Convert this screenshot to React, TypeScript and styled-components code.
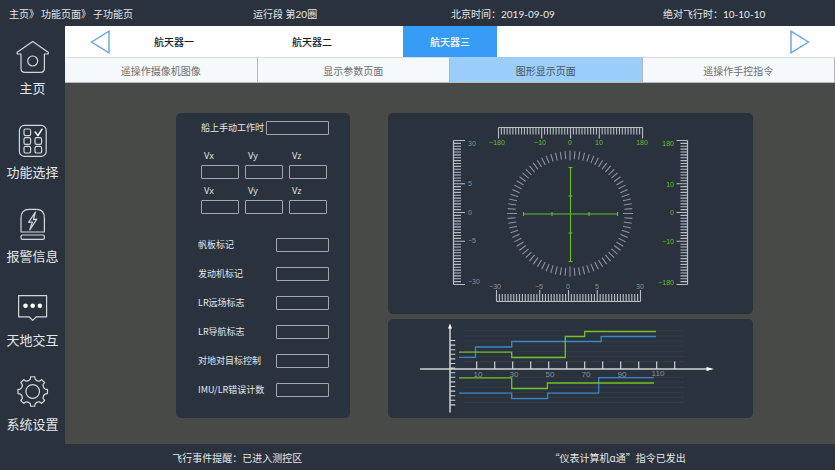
import React, { useState } from 'react';
import styled, { createGlobalStyle } from 'styled-components';

const color = {
  shell: '#2a323d',
  canvas: '#484a47',
  text: '#e4e7ea',
  blue: '#379cf5',
  lightBlue: '#9bcefa',
  tick: '#b9bec5',
  dim: '#8b919b',
  green: '#68bd2b',
};

const GlobalStyle = createGlobalStyle`
  *, *::before, *::after { box-sizing: border-box; }
  body {
    margin: 0;
    background: ${color.canvas};
    color: ${color.text};
    font-family: "Noto Sans CJK SC", "Noto Sans", sans-serif;
    font-size: 10px;
  }
  button, input { font: inherit; }
`;

/* ---------- shell ---------- */

const Page = styled.div`
  min-height: 100vh;
  display: flex;
  flex-direction: column;
`;

const Header = styled.header`
  display: grid;
  grid-template-columns: 244fr 198fr 212fr 172fr;
  align-items: center;
  height: 26px;
  padding-left: 9px;
  background: ${color.shell};
  font-family: Lato, "Noto Sans CJK SC", sans-serif;
  white-space: nowrap;
`;

const Breadcrumb = styled.nav`
  display: flex;
  gap: 2px;
`;

const Crumb = styled.a`
  color: inherit;
  text-decoration: none;
`;

const Body = styled.div`
  flex: 1;
  display: flex;
`;

const Sidebar = styled.nav`
  flex: none;
  display: flex;
  flex-direction: column;
  gap: 26px;
  width: 65px;
  padding-top: 13px;
  background: ${color.shell};
`;

const SideLink = styled.a`
  display: flex;
  flex-direction: column;
  align-items: center;
  gap: 6px;
  color: ${color.text};
  font-size: 13px;
  line-height: 18px;
  text-decoration: none;
`;

const SideIcon = styled.svg`
  display: block;
  width: 34px;
  height: 34px;
  fill: none;
  stroke: #d3d7dc;
  stroke-width: 1.2;
  stroke-linejoin: round;
  stroke-linecap: round;
`;

const Content = styled.div`
  flex: 1;
  min-width: 0;
  display: flex;
  flex-direction: column;
`;

const Footer = styled.footer`
  display: grid;
  grid-template-columns: 1fr 1fr;
  align-items: center;
  justify-items: center;
  height: 26px;
  padding: 0 27px 0 47px;
  background: ${color.shell};
`;

/* ---------- tabs ---------- */

const CraftBar = styled.div`
  display: flex;
  align-items: stretch;
  height: 31px;
  padding: 0 24px;
  background: #ffffff;
`;

const ArrowButton = styled.button`
  display: flex;
  align-items: center;
  padding: 0;
  border: 0;
  background: none;
  cursor: pointer;

  svg {
    width: 21px;
    height: 24px;
    fill: none;
    stroke: #62a3e2;
    stroke-width: 1.4;
  }
`;

const CraftTabs = styled.div`
  flex: 1;
  display: flex;
  gap: 44px;
  padding-left: 17px;
`;

const CraftTab = styled.button<{ $active: boolean }>`
  width: 94px;
  padding: 0;
  border: 0;
  background: ${(p) => (p.$active ? color.blue : 'transparent')};
  color: ${(p) => (p.$active ? '#ffffff' : '#1c1c1c')};
  font-weight: 500;
  cursor: pointer;
`;

const PageTabs = styled.div`
  display: grid;
  grid-template-columns: repeat(4, 1fr);
  height: 26px;
  border-bottom: 1px solid #b9bcbe;
`;

const PageTab = styled.button<{ $active: boolean }>`
  padding: 0;
  border: 0;
  border-top: 1px solid ${(p) => (p.$active ? color.lightBlue : '#dadcde')};
  border-right: 1px solid #b4b7b9;
  background: ${(p) => (p.$active ? color.lightBlue : '#f5f9fc')};
  color: ${(p) => (p.$active ? '#4b5258' : '#6d6d6d')};
  cursor: pointer;
`;

/* ---------- panels ---------- */

const Main = styled.main`
  flex: 1;
  display: grid;
  grid-template-columns: 174fr 365fr;
  align-items: start;
  gap: 38px;
  padding: 30px 82px 26px 111px;
`;

const FormPanel = styled.form`
  align-self: stretch;
  padding: 8px 21px 20px 22px;
  border-radius: 5px;
  background: ${color.shell};
  font-size: 9px;
  line-height: 14px;
  white-space: nowrap;
`;

const Charts = styled.div`
  display: grid;
  gap: 5px;
`;

const ChartPanel = styled.section`
  border-radius: 5px;
  background: ${color.shell};
`;

const Drawing = styled.svg`
  display: block;
  width: 100%;
  height: auto;
  font-family: "Liberation Sans", Arial, sans-serif;
`;

const WorkTime = styled.div`
  display: flex;
  justify-content: space-between;
  padding-left: 3px;
`;

const Vector = styled.div`
  display: grid;
  grid-template-columns: repeat(3, 38px);
  gap: 6px;
  padding-left: 3px;
`;

const VectorGroup = styled.div`
  display: grid;
  gap: 5px;
  padding: 14px 0 24px;
`;

const Axis = styled.div`
  display: grid;
  gap: 2px;
`;

const AxisLabel = styled.label`
  padding-left: 3px;
  font-family: "Open Sans", "Noto Sans", sans-serif;
`;

const Flags = styled.div`
  display: grid;
  gap: 15px;
`;

const FlagRow = styled.div`
  display: flex;
  justify-content: space-between;
`;

const Field = styled.input<{ $width: string }>`
  width: ${(p) => p.$width};
  height: 14px;
  padding: 0 3px;
  border: 1px solid #a4a8ae;
  border-radius: 1px;
  background: transparent;
  color: ${color.text};
  font-size: 9px;
`;

/* ---------- icons ---------- */

const gearPath = (() => {
  const at = (r: number, deg: number) => {
    const a = (deg * Math.PI) / 180;
    return `${(16.7 + r * Math.cos(a)).toFixed(2)} ${(16.5 + r * Math.sin(a)).toFixed(2)}`;
  };
  const parts: string[] = [];
  for (let i = 0; i < 8; i += 1) {
    const c = i * 45;
    parts.push(`${i === 0 ? 'M' : 'L'}${at(12.6, c - 11)}`);
    parts.push(`Q${at(14, c - 9)} ${at(14.9, c - 8)}`);
    parts.push(`L${at(14.9, c + 8)}`);
    parts.push(`Q${at(14, c + 9)} ${at(12.6, c + 11)}`);
    parts.push(`Q${at(10.8, c + 22.5)} ${at(12.6, c + 34)}`);
  }
  return `${parts.join('')}Z`;
})();

const HomeIcon = () => (
  <SideIcon viewBox="0 0 34 34" aria-hidden="true">
    <path d="M16.7 2.6 1.2 13.3Q.6 15 2.2 15H5V29.5Q5 33.4 9 33.4H24.4Q28.4 33.4 28.4 29.5V15H31.2Q32.8 15 32.2 13.3Z" />
    <circle cx="16.7" cy="22" r="5" />
  </SideIcon>
);

const SelectIcon = () => (
  <SideIcon viewBox="0 0 34 34" aria-hidden="true">
    <rect x="3.4" y="2.4" width="26.8" height="31" rx="5" />
    {[
      [8, 6],
      [8, 14.7],
      [19, 14.7],
      [8, 23.4],
      [19, 23.4],
    ].map(([x, y]) => (
      <rect key={`${x}-${y}`} x={x} y={y} width="6.6" height="6.6" rx="1.6" />
    ))}
    <path d="M19.2 9 22 12.6 26 6.2" stroke="#ffffff" strokeWidth="1.5" />
  </SideIcon>
);

const AlarmIcon = () => (
  <SideIcon viewBox="0 0 34 34" aria-hidden="true">
    <path d="M5 25V11Q5 2.4 13 2.4H20.4Q28.4 2.4 28.4 11V25Z" />
    <rect x="5" y="28" width="23.4" height="4.4" rx="1.6" />
    <path d="M19.4 5 12.6 15.4 16.4 15 13.8 23 20.8 12.2 17.4 12.6Z" />
  </SideIcon>
);

const ChatIcon = () => (
  <SideIcon viewBox="0 0 34 34" aria-hidden="true">
    <path d="M2.6 4.6H30.6V25.8H20.4L16.7 29.4 13 25.8H2.6Z" />
    {[9.5, 16.7, 23.9].map((x) => (
      <circle key={x} cx={x} cy="14.8" r="2.3" fill="#ffffff" stroke="none" />
    ))}
  </SideIcon>
);

const GearIcon = () => (
  <SideIcon viewBox="0 0 34 34" aria-hidden="true">
    <path d={gearPath} />
    <circle cx="16.7" cy="16.5" r="6.8" />
  </SideIcon>
);

/* ---------- attitude drawing ---------- */

const MAJOR = [0, 15, 25, 35, 50];
const TICKS = Array.from({ length: 51 }, (_, i) => i);
const STEP = 2.88;

type RulerProps = {
  start: number;
  spine: number;
  minor: number;
  major: number;
  vertical?: boolean;
};

const Ruler = ({ start, spine, minor, major, vertical }: RulerProps) => {
  const seg = (p: number, a: number, b: number) =>
    vertical ? `M${a} ${p}H${b}` : `M${p} ${a}V${b}`;
  const line = vertical
    ? `M${spine} ${start}V${start + 50 * STEP}`
    : `M${start} ${spine}H${start + 50 * STEP}`;
  const minors = TICKS.filter((i) => !MAJOR.includes(i));
  return (
    <g fill="none" stroke={color.tick}>
      <path d={line} strokeWidth="1.2" />
      <path d={minors.map((i) => seg(start + i * STEP, spine, minor)).join('')} strokeWidth="1.1" />
      <path d={MAJOR.map((i) => seg(start + i * STEP, spine, major)).join('')} strokeWidth="1.1" />
    </g>
  );
};

type Mark = [string, number, number];

const Marks = ({ marks, fill, anchor }: { marks: Mark[]; fill: string; anchor: 'start' | 'middle' | 'end' }) => (
  <g fill={fill} fontSize="7" textAnchor={anchor}>
    {marks.map(([label, x, y]) => (
      <text key={label} x={x} y={y}>
        {label}
      </text>
    ))}
  </g>
);

const dialTicks = Array.from({ length: 80 }, (_, i) => {
  const a = (i * 4.5 * Math.PI) / 180;
  const inner = i % 20 === 0 ? 53 : 54.5;
  const outer = i % 20 === 0 ? 63 : 62.5;
  const pt = (r: number) => `${(182 + r * Math.cos(a)).toFixed(2)} ${(100.5 + r * Math.sin(a)).toFixed(2)}`;
  return `M${pt(inner)}L${pt(outer)}`;
}).join('');

const Attitude = () => (
  <Drawing viewBox="0 0 365 201" role="img" aria-label="姿态显示">
    <Ruler start={110.5} spine={14.5} minor={21.5} major={25.5} />
    <Ruler start={108.5} spine={188.5} minor={181} major={177} />
    <Ruler start={27.5} spine={65.5} minor={73} major={77} vertical />
    <Ruler start={27.5} spine={299.5} minor={292.5} major={288.5} vertical />
    <Marks
      fill={color.green}
      anchor="middle"
      marks={[
        ['−180', 109, 32],
        ['−10', 152, 32],
        ['0', 182, 32],
        ['10', 211, 32],
        ['180', 254, 32],
      ]}
    />
    <Marks
      fill={color.green}
      anchor="end"
      marks={[
        ['180', 286, 33],
        ['10', 286, 74],
        ['0', 286, 102],
        ['−10', 286, 131],
        ['−180', 286, 172],
      ]}
    />
    <Marks
      fill={color.dim}
      anchor="start"
      marks={[
        ['30', 80, 33],
        ['5', 80, 73],
        ['0', 80, 102],
        ['−5', 80, 130],
        ['−30', 80, 171],
      ]}
    />
    <Marks
      fill={color.dim}
      anchor="middle"
      marks={[
        ['−30', 107, 176],
        ['−5', 151, 176],
        ['0', 180, 176],
        ['5', 209, 176],
        ['30', 252, 176],
      ]}
    />
    <path d={dialTicks} fill="none" stroke="#8e949d" strokeWidth="1.1" />
    <path
      d="M135.5 101H229.5M135.5 99V103M164 99V103M201 99V103M229.5 99V103M182.5 54.5V148.5M180.5 54.5H184.5M180.5 83H184.5M180.5 120H184.5M180.5 148.5H184.5"
      fill="none"
      stroke={color.green}
      strokeWidth="1.1"
    />
  </Drawing>
);

/* ---------- step chart ---------- */

const gridRows = [11.7, 17, 22, 27.2, 32.4, 37.6, 42.5, 58.3, 63, 68.3, 73.4, 78.5, 83.5];

const StepChart = () => (
  <Drawing viewBox="0 0 365 99" role="img" aria-label="参数曲线">
    <path d={gridRows.map((y) => `M76 ${y}H296`).join('')} stroke="#333b47" strokeWidth="1" />
    <g fill="none" strokeWidth="1.3">
      <path d="M71 38.3H87.5V28H123.7V22.5H213.2V17.5H268" stroke="#3a86ca" />
      <path d="M71 33.2H123.7V38.5H177.3V17.5H196.7V12.5H268" stroke="#73c225" />
      <path d="M71 74.2H123.7V79.6H159.6V74.2H210.7V58.7H266" stroke="#3a86ca" />
      <path d="M71 58.8H123.7V69.5H159.4V64H266" stroke="#73c225" />
    </g>
    <g fill="none" stroke="#d0d3d7">
      <path d="M62 93.5V8M32 50H320" strokeWidth="1.5" />
      <path
        d={Array.from({ length: 15 }, (_, i) => `M62 ${(21.5 + i * 4.6).toFixed(1)}H67.3`).join('')}
        strokeWidth="1.1"
      />
      <path
        d={Array.from({ length: 12 }, (_, i) => `M${88.7 + i * 18} 42.5V50`).join('')}
        strokeWidth="1.2"
      />
    </g>
    <path d="M62 4.5 64 9.5H60ZM326 50 318.5 48V52Z" fill="#ffffff" />
    <g fill={color.dim} fontSize="8" textAnchor="middle">
      {['10', '30', '50', '70', '90', '110'].map((label, i) => (
        <text key={label} x={90 + i * 36} y={label === '110' ? 57 : 58}>
          {label}
        </text>
      ))}
    </g>
  </Drawing>
);

/* ---------- page ---------- */

const sideItems = [
  { label: '主页', Icon: HomeIcon },
  { label: '功能选择', Icon: SelectIcon },
  { label: '报警信息', Icon: AlarmIcon },
  { label: '天地交互', Icon: ChatIcon },
  { label: '系统设置', Icon: GearIcon },
];

const crafts = ['航天器一', '航天器二', '航天器三'];
const pages = ['遥操作摄像机图像', '显示参数页面', '图形显示页面', '遥操作手控指令'];
const flags = ['帆板标记', '发动机标记', 'LR远场标志', 'LR导航标志', '对地对目标控制', 'IMU/LR错误计数'];

export default function App() {
  const [craft, setCraft] = useState(2);
  const [page, setPage] = useState(2);

  return (
    <Page>
      <GlobalStyle />
      <Header>
        <Breadcrumb aria-label="路径">
          <Crumb href="#home">主页》</Crumb>
          <Crumb href="#functions">功能页面》</Crumb>
          <Crumb href="#sub">子功能页</Crumb>
        </Breadcrumb>
        <span>运行段 第20圈</span>
        <span>北京时间：2019-09-09</span>
        <span>绝对飞行时：10-10-10</span>
      </Header>

      <Body>
        <Sidebar aria-label="主导航">
          {sideItems.map(({ label, Icon }) => (
            <SideLink key={label} href={`#${label}`}>
              <Icon />
              {label}
            </SideLink>
          ))}
        </Sidebar>

        <Content>
          <CraftBar>
            <ArrowButton type="button" aria-label="上一个" onClick={() => setCraft(Math.max(0, craft - 1))}>
              <svg viewBox="0 0 21 24">
                <path d="M2.5 12 20 1.2V22.8Z" />
              </svg>
            </ArrowButton>
            <CraftTabs role="tablist">
              {crafts.map((name, i) => (
                <CraftTab
                  key={name}
                  type="button"
                  role="tab"
                  aria-selected={craft === i}
                  $active={craft === i}
                  onClick={() => setCraft(i)}
                >
                  {name}
                </CraftTab>
              ))}
            </CraftTabs>
            <ArrowButton type="button" aria-label="下一个" onClick={() => setCraft(Math.min(2, craft + 1))}>
              <svg viewBox="0 0 21 24">
                <path d="M18.5 12 1 1.2V22.8Z" />
              </svg>
            </ArrowButton>
          </CraftBar>

          <PageTabs role="tablist">
            {pages.map((name, i) => (
              <PageTab
                key={name}
                type="button"
                role="tab"
                aria-selected={page === i}
                $active={page === i}
                onClick={() => setPage(i)}
              >
                {name}
              </PageTab>
            ))}
          </PageTabs>

          <Main>
            <FormPanel>
              <WorkTime>
                <label htmlFor="work-time">船上手动工作时</label>
                <Field id="work-time" $width="63px" />
              </WorkTime>
              <VectorGroup>
                {['a', 'b'].map((group) => (
                  <Vector key={group}>
                    {['Vx', 'Vy', 'Vz'].map((axis) => (
                      <Axis key={axis}>
                        <AxisLabel htmlFor={`${axis}-${group}`}>{axis}</AxisLabel>
                        <Field id={`${axis}-${group}`} $width="100%" />
                      </Axis>
                    ))}
                  </Vector>
                ))}
              </VectorGroup>
              <Flags>
                {flags.map((name, i) => (
                  <FlagRow key={name}>
                    <label htmlFor={`flag-${i}`}>{name}</label>
                    <Field id={`flag-${i}`} $width="53px" />
                  </FlagRow>
                ))}
              </Flags>
            </FormPanel>

            <Charts>
              <ChartPanel>
                <Attitude />
              </ChartPanel>
              <ChartPanel>
                <StepChart />
              </ChartPanel>
            </Charts>
          </Main>
        </Content>
      </Body>

      <Footer>
        <span>飞行事件提醒：已进入测控区</span>
        <span>“仪表计算机ɑ通”指令已发出</span>
      </Footer>
    </Page>
  );
}
